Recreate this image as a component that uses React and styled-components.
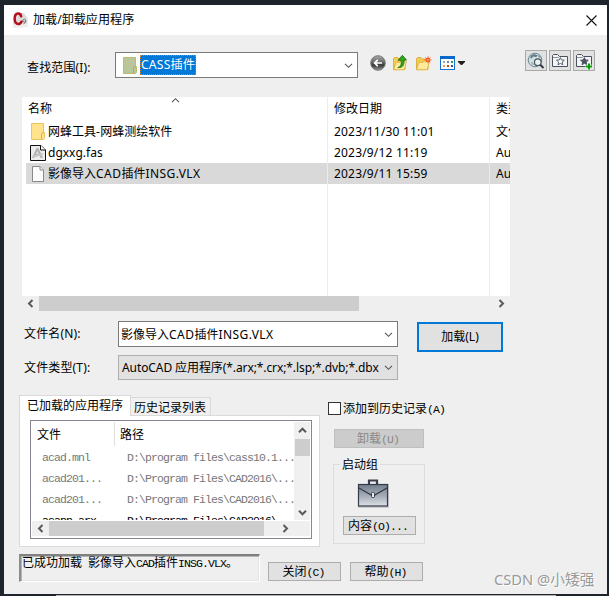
import React from "react";
import styled, { createGlobalStyle, css } from "styled-components";

const Global = createGlobalStyle`
  * { box-sizing: border-box; }
  body { margin: 0; background: #1d242c; overflow: hidden; }
`;

const Desktop = styled.div`
  width: 609px;
  height: 596px;
  padding: 5px 2px 0 4px;
  background: #1d242c;
  overflow: hidden;
  font-family: "Noto Sans", "Noto Sans CJK SC", sans-serif;
  font-size: 12px;
  line-height: 16px;
  color: #000;
`;

const DesktopEdge = styled.div`
  width: 500px;
  height: 1px;
  margin: 1px 0 0 52px;
  background: #b4b6b6;
`;

const Dialog = styled.div`
  position: relative;
  width: 603px;
  height: 589px;
  background: #efefef;
  display: flex;
  flex-direction: column;
`;

const TitleBar = styled.header`
  height: 30px;
  flex: none;
  background: #fff;
  display: flex;
  align-items: center;
  padding: 0 10px 0 8px;
`;

const Title = styled.div`
  flex: 1;
  margin-left: 4px;
  font-size: 12.1px;
`;

const Latin = styled.span`
  letter-spacing: ${(p) => p.$gap || 0}px;
`;

const MonoLatin = styled.span`
  font-family: "Liberation Mono", monospace;
  font-size: 11.5px;
  letter-spacing: -0.9px;
`;

const Song = styled.span`
  font-family: "Noto Sans CJK SC", sans-serif;
  font-size: 12px;
  line-height: 16px;
  white-space: pre;
`;

function SongText({ children }) {
  const parts = children.match(/[\x20-\x7e]+|[^\x20-\x7e]+/g);
  return (
    <Song>
      {parts.map((part, i) =>
        /[\x20-\x7e]/.test(part) ? <MonoLatin key={i}>{part}</MonoLatin> : part
      )}
    </Song>
  );
}

function FileName({ children }) {
  const parts = children.match(/[\x20-\x7e]+|[^\x20-\x7e]+/g);
  return (
    <span>
      {parts.map((part, i) =>
        /[A-Z-]/.test(part) ? <Latin key={i} $gap={0.45}>{part}</Latin> : part
      )}
    </span>
  );
}

const LookRow = styled.div`
  display: flex;
  align-items: flex-start;
  height: 28px;
  margin-top: 15px;
  padding-left: 23px;
`;

const FieldLabel = styled.label`
  width: ${(p) => p.$width}px;
  padding-top: ${(p) => p.$top || 0}px;
  letter-spacing: 0.15px;
  white-space: nowrap;
`;

const Combo = styled.div`
  width: ${(p) => p.$width}px;
  height: 26px;
  display: flex;
  align-items: center;
  flex: none;
  white-space: nowrap;
  padding: 0 4px 0 2px;
  border: 1px solid #7a7a7a;
  background: #fff;
  ${(p) =>
    p.$grey &&
    css`
      height: 25px;
      padding-left: 3px;
      border-color: #adadad;
      background: #e1e1e1;
    `}
`;

const LookCombo = styled(Combo)`
  margin-top: 2px;
  padding-left: 7px;
`;

const ComboText = styled.div`
  flex: 1;
  padding-top: 1px;
  letter-spacing: ${(p) => p.$gap || 0}px;
`;

const PickedFolder = styled.span`
  height: 20px;
  margin-left: 3px;
  line-height: 17px;
  color: #fff;
  background: #0078d7;
  border: 1px dotted #e07b1e;
  margin-right: auto;
  letter-spacing: 0.15px;
  font-size: 12.2px;
`;

const NavIcons = styled.div`
  display: flex;
  align-items: center;
  height: 20px;
  margin: 3px 0 0 12px;
  gap: 5px;
`;

const ViewSlot = styled.span`
  display: flex;
  margin-left: 3px;
`;

const Shortcuts = styled.div`
  display: flex;
  gap: 2px;
  margin: 0 12px 0 auto;
`;

const ShortcutButton = styled.button`
  width: 22px;
  height: 21px;
  padding: 0;
  display: flex;
  align-items: center;
  justify-content: center;
  border: 1px solid #a9a9a9;
  background: #e1e1e1;
`;

const FileList = styled.section`
  width: 488px;
  height: 199px;
  margin: 19px 0 0 18px;
  flex: none;
  background: #fff;
  display: grid;
  grid-template-columns: 306px 162px 1fr;
  overflow: hidden;
`;

const Column = styled.div`
  border-right: ${(p) => (p.$last ? 0 : 1)}px solid #e5eef8;
  padding-left: ${(p) => (p.$first ? 4 : 0)}px;
  min-width: 0;
  overflow: hidden;
`;

const ColumnHead = styled.div`
  height: 24px;
  padding: 4px 0 0 ${(p) => (p.$first ? 2 : 6)}px;
  display: flex;
  white-space: nowrap;
`;

const SortMark = styled.span`
  margin-left: 119px;
  margin-top: -8px;
`;

const Cell = styled.div`
  height: 21px;
  display: flex;
  align-items: center;
  padding-left: ${(p) => (p.$first ? 4 : 6)}px;
  white-space: nowrap;
  background: ${(p) => (p.$selected ? "#d9d9d9" : "transparent")};
  margin-right: -1px;
`;

const IconCell = styled.span`
  display: flex;
  justify-content: center;
  width: 16px;
  margin-right: 2px;
  flex: none;
`;

const HScroll = styled.div`
  display: flex;
  align-items: center;
  width: ${(p) => p.$width}px;
  height: 15px;
  flex: none;
  background: #efefef;
`;

const MainScroll = styled(HScroll)`
  margin-left: 18px;
`;

const InnerScroll = styled(HScroll)`
  margin-top: 1px;
`;

const ScrollThumb = styled.div`
  flex: none;
  width: ${(p) => p.$w}px;
  height: ${(p) => p.$h}px;
  background: #cdcdcd;
`;

const ArrowSlot = styled.div`
  display: flex;
  justify-content: center;
  align-items: center;
  width: 17px;
  height: ${(p) => p.$h || 15}px;
  margin-left: ${(p) => (p.$end ? "auto" : 0)};
`;

const BottomSlot = styled(ArrowSlot)`
  margin-top: auto;
`;

const InnerRight = styled(ArrowSlot)`
  margin-left: 13px;
`;

const FormArea = styled.div`
  display: flex;
  align-items: flex-start;
  height: 59px;
  margin: 10px 0 0 20px;
`;

const Fields = styled.div`
  display: flex;
  flex-direction: column;
  gap: 8px;
`;

const Field = styled.div`
  display: flex;
`;

const LoadButton = styled.button`
  width: 86px;
  height: 30px;
  margin: 1px 0 0 19px;
  padding: 0;
  border: 2px solid #0078d7;
  background: #e1e1e1;
  font: inherit;
  color: inherit;
`;

const Lower = styled.div`
  display: flex;
  align-items: flex-start;
  height: 152px;
  margin: 15px 0 0 15px;
`;

const TabBox = styled.div`
  width: 301px;
`;

const TabStrip = styled.div`
  height: 20px;
  display: flex;
  align-items: flex-end;
`;

const Tab = styled.div`
  width: ${(p) => (p.$active ? 112 : 80)}px;
  height: ${(p) => (p.$active ? 21 : 18)}px;
  padding: ${(p) => (p.$active ? "1px 0 0 7px" : "1px 0 0 3px")};
  border: 1px solid #d9d9d9;
  border-bottom: 0;
  border-left-width: ${(p) => (p.$active ? 1 : 0)}px;
  margin-bottom: ${(p) => (p.$active ? -1 : 0)}px;
  background: ${(p) => (p.$active ? "#fff" : "#f0f0f0")};
  z-index: ${(p) => (p.$active ? 1 : 0)};
  white-space: nowrap;
  line-height: 16px;
`;

const TabPage = styled.div`
  height: 132px;
  border: 1px solid #dadada;
  background: #fff;
  padding: 4px 7px 7px 10px;
`;

const AppList = styled.div`
  width: 282px;
  height: 119px;
  border: 1px solid #828790;
  padding: 1px;
  display: flex;
  flex-direction: column;
`;

const AppTop = styled.div`
  display: flex;
  height: 98px;
`;

const AppContent = styled.div`
  flex: 1;
  overflow: hidden;
`;

const AppRow = styled.div`
  display: grid;
  grid-template-columns: 85px 1fr;
  height: 21px;
  align-items: center;
  padding-left: 10px;
  white-space: nowrap;
  color: ${(p) => (p.$dark ? "#000" : "#777")};
`;

const AppHead = styled.div`
  display: flex;
  height: 24px;
`;

const AppHeadCell = styled.div`
  width: ${(p) => p.$width}px;
  padding: 4px 0 0 5px;
  border-right: ${(p) => (p.$rule ? 1 : 0)}px solid #dedede;
`;

const VScroll = styled.div`
  width: 16px;
  height: 98px;
  display: flex;
  flex-direction: column;
  align-items: center;
  background: #f0f0f0;
`;

const SideColumn = styled.div`
  margin-left: 8px;
  padding-top: 6px;
`;

const CheckLine = styled.label`
  display: flex;
  align-items: center;
  height: 15px;
`;

const CheckBox = styled.span`
  width: 13px;
  height: 13px;
  margin-right: 2px;
  border: 1px solid #333;
  background: #fff;
`;

const PlainButton = styled.button`
  display: flex;
  align-items: center;
  justify-content: center;
  width: ${(p) => p.$width}px;
  height: 19px;
  padding: 0 2px 0 0;
  border: 1px solid ${(p) => (p.disabled ? "#bfbfbf" : "#adadad")};
  background: ${(p) => (p.disabled ? "#cccccc" : "#e1e1e1")};
  color: ${(p) => (p.disabled ? "#888" : "#000")};
`;

const UnloadSlot = styled.div`
  margin: 13px 0 0 6px;
`;

const StartupGroup = styled.div`
  width: 92px;
  height: 80px;
  margin: 16px 0 0 5px;
  border: 1px solid #dcdcdc;
  display: flex;
  flex-direction: column;
  align-items: center;
`;

const GroupName = styled.div`
  align-self: flex-start;
  height: 16px;
  margin: -9px 0 0 6px;
  padding: 0 2px;
  background: #efefef;
`;

const CaseSlot = styled.div`
  width: 32px;
  height: 32px;
  margin: 6px 14px 6px 23px;
  align-self: flex-start;
`;

const Footer = styled.div`
  display: flex;
  align-items: flex-end;
  height: 28px;
  margin: 7px 0 0 15px;
`;

const StatusBox = styled.div`
  width: 241px;
  height: 28px;
  margin-right: 8px;
  padding-left: 1px;
  border-style: solid;
  border-width: 2px 1px 1px 2px;
  border-color: #808080 #fff #fff #8c8c8c;
  box-shadow: inset 1px 1px 0 #b5b5b5, inset -1px -1px 0 #e3e3e3;
  white-space: nowrap;
`;

const StatusText = styled.div`
  margin-top: -2px;
`;

const FooterButtons = styled.div`
  display: flex;
  gap: 9px;
  padding-bottom: 1px;
`;

const Watermark = styled.div`
  position: absolute;
  left: 490px;
  top: 564px;
  font-size: 14.7px;
  line-height: 20px;
  color: #999;
  text-shadow: 1px 1px 0 #fff;
  white-space: nowrap;
`;

const arrowPaths = {
  left: "M6.5 1L3 4.5L6.5 8",
  right: "M2.5 1L6 4.5L2.5 8",
  up: "M1 6.2L4.5 2.7L8 6.2",
  down: "M1 2.8L4.5 6.3L8 2.8",
};

function Arrow({ dir, thin }) {
  return (
    <svg width="9" height="9" viewBox="0 0 9 9">
      <path d={arrowPaths[dir]} fill="none" stroke={thin ? "#555" : "#5a5a5a"} strokeWidth={thin ? 1.1 : 2} />
    </svg>
  );
}

function AppLogo() {
  return (
    <svg width="17" height="17" viewBox="0 0 17 17">
      <path d="M1 5L4 1H12L15.5 6V15L1 15.5Z" fill="#dedede" />
      <path d="M1 12L8 10L15.5 12V15L1 15.5Z" fill="#ededed" />
      <path d="M9.3 5.2C9 2.3 7.7 1.4 6 1.5C3.5 1.7 2.6 4 2.7 7C2.8 10.4 4.2 12.2 6.5 12C8.4 11.8 9.4 10.6 9.9 8.6" fill="none" stroke="#b3101c" strokeWidth="2.4" />
      <path d="M9 1.4V5.7" stroke="#b3101c" />
      <circle cx="12.3" cy="8.6" r="1.4" fill="none" stroke="#777" />
      <path d="M13.7 8.6C13.8 10.5 13.2 11.5 11.4 11.8" fill="none" stroke="#777" />
    </svg>
  );
}

function Folder({ green }) {
  return (
    <svg width="14" height="17" viewBox="0 0 14 17">
      <path d="M.5.5H12.5V10H13.5V15.5L12.5 16.5H.5Z" fill={green ? "#bac69a" : "#ffe38d"} stroke={green ? "#b8bb73" : "#ecc35c"} />
      <path d="M10.5 16V11L11.5 9.5H13.5" fill="none" stroke={green ? "#a9ae5a" : "#e4ae38"} />
    </svg>
  );
}

function FasFile() {
  return (
    <svg width="16" height="16" viewBox="0 0 16 16">
      <path d="M.5.5H11L15.5 5V15.5H.5Z" fill="#ececec" stroke="#111" />
      <path d="M10.5.5V5H15.5" fill="#fff" stroke="#111" />
      <path d="M2 13L6.6 3H8.4L13 13H10.5L9.5 10.5H5L4 13Z" fill="#b2b2b2" />
      <path d="M6.3 9L7.3 6L8.5 9Z" fill="#eee" />
      <path d="M2 11L13 8V10L2 13Z" fill="#c7c7c7" />
    </svg>
  );
}

function BlankFile() {
  return (
    <svg width="12" height="16" viewBox="0 0 12 16">
      <path d="M.5.5H8L11.5 4V15.5H.5Z" fill="#fcfcfc" stroke="#8a8a8a" />
      <path d="M8 .5V4H11.5" fill="#eee" stroke="#8a8a8a" />
    </svg>
  );
}

function BackIcon() {
  return (
    <svg width="16" height="16" viewBox="0 0 16 16">
      <defs>
        <linearGradient id="back" x1="0" y1="0" x2="0" y2="1">
          <stop offset="0" stopColor="#aaa" />
          <stop offset=".45" stopColor="#666" />
          <stop offset=".65" stopColor="#393939" />
          <stop offset="1" stopColor="#9b9b9b" />
        </linearGradient>
      </defs>
      <circle cx="8" cy="8" r="7.3" fill="url(#back)" stroke="#777" strokeWidth="1" />
      <path d="M12 8H4.8M7.8 4.8L4.6 8L7.8 11.2" fill="none" stroke="#fff" strokeWidth="1.7" />
    </svg>
  );
}

function OpenFolder({ kind }) {
  return (
    <svg width="18" height="18" viewBox="0 0 18 18">
      <path d="M2.5 15.5V4.5L3.5 3.5H7L8 5H14V15.5Z" fill="#f4cb55" stroke="#d4a82e" strokeWidth=".8" />
      <path d="M2.5 15.8L5 8.3H9L10 7H15.5L13.3 15.8Z" fill="#ffe99a" stroke="#d9ac3a" strokeWidth=".8" />
      {kind === "up" ? (
        <path d="M6.8 13.5C10.3 12.7 10.5 10 10 6.3H7L11.4 1.3L15.5 6H13C13.3 11 11.8 14 6.8 13.5Z" fill="#32a51c" stroke="#107414" strokeWidth=".8" />
      ) : (
        <g stroke="#f05223" strokeWidth="1">
          <path d="M14 2.4V9.4M10.5 5.9H17.5M11.6 3.5L16.4 8.3M16.4 3.5L11.6 8.3" />
          <circle cx="14" cy="5.9" r="1.5" fill="#ffb33f" />
        </g>
      )}
    </svg>
  );
}

function ViewIcon() {
  return (
    <svg width="26" height="16" viewBox="0 0 26 16">
      <rect x=".5" y="1.5" width="14" height="13" fill="#fff" stroke="#1671d1" />
      <rect x="0" y="1" width="15" height="3" fill="#0868cc" />
      <path d="M3 6H5V8H3Z" fill="#9ba9ae" />
      <path d="M7 6H9V8H7Z" fill="#777fb9" />
      <path d="M11 6H13V8H11Z" fill="#30993e" />
      <path d="M3 10H5V12H3Z" fill="#e09b5f" />
      <path d="M7 10H9V12H7Z" fill="#bd4524" />
      <path d="M11 10H13V12H11Z" fill="#3d4e91" />
      <path d="M18 6H25V7L22 10H21L18 7Z" fill="#222" />
    </svg>
  );
}

function WebIcon() {
  return (
    <svg width="18" height="18" viewBox="0 0 18 18">
      <circle cx="8" cy="8" r="6.8" fill="#cfe0e3" stroke="#6d8790" />
      <path d="M4 3.5L7 2L11 3.5L9 5L6 4.5L4.5 6.5L3 6ZM11.5 3L14 6L11.5 5Z" fill="#5f7a82" />
      <path d="M4 10L6 10L7 13L5 13Z" fill="#9db5ba" />
      <circle cx="10.8" cy="10.2" r="3.3" fill="#e9f3f4" stroke="#4b555c" strokeWidth="1.2" />
      <path d="M13.3 12.8L16.5 16" stroke="#343b43" strokeWidth="2" />
    </svg>
  );
}

function StarFolder({ add }) {
  return (
    <svg width="18" height="18" viewBox="0 0 18 18">
      <path d="M1.5 14.5V3.5L2.5 2.5H6.5L8.5 4.5H16.5V14.5Z" fill="#f3f5f6" stroke="#48515c" />
      <path d="M2 5.5H7L8.5 4.5" fill="none" stroke="#8d949c" />
      <path d="M9.4 5.6L10.5 8L13.3 8.2L11.2 10L11.8 12.8L9.4 11.3L7 12.8L7.6 10L5.5 8.2L8.3 8Z" fill={add ? "#49505d" : "#fff"} stroke="#49505d" strokeWidth=".9" />
      {add && <path d="M14 11V18M10.5 14.5H17.5" stroke="#e9f3e9" strokeWidth="3.4" />}
      {add && <path d="M14 11.5V17.5M11 14.5H17" stroke="#079e08" strokeWidth="2" />}
    </svg>
  );
}

function Briefcase() {
  return (
    <svg width="32" height="32" viewBox="0 0 32 32">
      <defs>
        <linearGradient id="case" x1="0" y1="0" x2="0" y2="1">
          <stop offset="0" stopColor="#737e8d" />
          <stop offset=".55" stopColor="#a8afb9" />
          <stop offset="1" stopColor="#dde1e7" />
        </linearGradient>
      </defs>
      <path d="M12 6V2.5H20V6" fill="none" stroke="#383e4c" strokeWidth="2.2" />
      <rect x="1" y="6" width="31" height="24" fill="#c9cbce" />
      <rect x="1.5" y="6.5" width="29" height="21.5" fill="url(#case)" stroke="#343b49" strokeWidth="1.2" />
      <path d="M2 10L16 18L30 10" fill="none" stroke="#303746" strokeWidth="1.2" />
      <rect x="14.5" y="14.5" width="3" height="5" rx="1" fill="#eee" stroke="#303746" />
    </svg>
  );
}

const files = [
  { icon: <Folder />, name: "网蜂工具-网蜂测绘软件", date: "2023/11/30 11:01", type: "文件夹" },
  { icon: <FasFile />, name: "dgxxg.fas", date: "2023/9/12 11:19", type: "AutoCAD" },
  { icon: <BlankFile />, name: "影像导入CAD插件INSG.VLX", date: "2023/9/11 15:59", type: "AutoCAD", selected: true },
];

const loaded = [
  ["acad.mnl", "D:\\program files\\cass10.1..."],
  ["acad201...", "D:\\Program Files\\CAD2016\\..."],
  ["acad201...", "D:\\Program Files\\CAD2016\\..."],
  ["acapp.arx", "D:\\Program Files\\CAD2016\\", true],
];

export default function App() {
  return (
    <Desktop>
      <Global />
      <Dialog>
        <TitleBar>
          <AppLogo />
          <Title>加载/卸载应用程序</Title>
          <svg width="11" height="11" viewBox="0 0 11 11">
            <path d="M.5.5L10.5 10.5M10.5.5L.5 10.5" stroke="#111" strokeWidth="1.1" />
          </svg>
        </TitleBar>

        <LookRow>
          <FieldLabel $width={88} $top={10}>查找范围(I):</FieldLabel>
          <LookCombo $width={243}>
            <Folder green />
            <PickedFolder>CASS插件</PickedFolder>
            <Arrow dir="down" thin />
          </LookCombo>
          <NavIcons>
            <BackIcon />
            <OpenFolder kind="up" />
            <OpenFolder kind="new" />
            <ViewSlot><ViewIcon /></ViewSlot>
          </NavIcons>
          <Shortcuts>
            <ShortcutButton><WebIcon /></ShortcutButton>
            <ShortcutButton><StarFolder /></ShortcutButton>
            <ShortcutButton><StarFolder add /></ShortcutButton>
          </Shortcuts>
        </LookRow>

        <FileList>
          <Column $first>
            <ColumnHead $first>
              名称
              <SortMark><Arrow dir="up" thin /></SortMark>
            </ColumnHead>
            {files.map((f) => (
              <Cell key={f.name} $first $selected={f.selected}>
                <IconCell>{f.icon}</IconCell>
                <FileName>{f.name}</FileName>
              </Cell>
            ))}
          </Column>
          <Column>
            <ColumnHead>修改日期</ColumnHead>
            {files.map((f) => (
              <Cell key={f.name} $selected={f.selected}>
                <Latin $gap={0.18}>{f.date}</Latin>
              </Cell>
            ))}
          </Column>
          <Column $last>
            <ColumnHead>类型</ColumnHead>
            {files.map((f) => (
              <Cell key={f.name} $selected={f.selected}>{f.type}</Cell>
            ))}
          </Column>
        </FileList>
        <MainScroll $width={488}>
          <ArrowSlot><Arrow dir="left" /></ArrowSlot>
          <ScrollThumb $w={320} $h={15} />
          <ArrowSlot $end><Arrow dir="right" /></ArrowSlot>
        </MainScroll>

        <FormArea>
          <Fields>
            <Field>
              <FieldLabel $width={94} $top={5}>文件名(N):</FieldLabel>
              <Combo $width={280}>
                <ComboText><FileName>影像导入CAD插件INSG.VLX</FileName></ComboText>
                <Arrow dir="down" thin />
              </Combo>
            </Field>
            <Field>
              <FieldLabel $width={94} $top={5}>文件类型(T):</FieldLabel>
              <Combo $width={280} $grey>
                <ComboText $gap={-0.09}>AutoCAD 应用程序(*.arx;*.crx;*.lsp;*.dvb;*.dbx</ComboText>
                <Arrow dir="down" thin />
              </Combo>
            </Field>
          </Fields>
          <LoadButton>加载(L)</LoadButton>
        </FormArea>

        <Lower>
          <TabBox>
            <TabStrip>
              <Tab $active><SongText>已加载的应用程序</SongText></Tab>
              <Tab><SongText>历史记录列表</SongText></Tab>
            </TabStrip>
            <TabPage>
              <AppList>
                <AppTop>
                  <AppContent>
                    <AppHead>
                      <AppHeadCell $width={83} $rule><SongText>文件</SongText></AppHeadCell>
                      <AppHeadCell $width={150}><SongText>路径</SongText></AppHeadCell>
                    </AppHead>
                    {loaded.map(([file, path, dark], i) => (
                      <AppRow key={i} $dark={dark}>
                        <SongText>{file}</SongText>
                        <SongText>{path}</SongText>
                      </AppRow>
                    ))}
                  </AppContent>
                  <VScroll>
                    <ArrowSlot $h={17}><Arrow dir="up" /></ArrowSlot>
                    <ScrollThumb $w={15} $h={17} />
                    <BottomSlot><Arrow dir="down" /></BottomSlot>
                  </VScroll>
                </AppTop>
                <InnerScroll $width={278}>
                  <ArrowSlot><Arrow dir="left" /></ArrowSlot>
                  <ScrollThumb $w={215} $h={15} />
                  <InnerRight><Arrow dir="right" /></InnerRight>
                </InnerScroll>
              </AppList>
            </TabPage>
          </TabBox>

          <SideColumn>
            <CheckLine>
              <CheckBox />
              <SongText>添加到历史记录(A)</SongText>
            </CheckLine>
            <UnloadSlot>
              <PlainButton $width={90} disabled><SongText>卸载(U)</SongText></PlainButton>
            </UnloadSlot>
            <StartupGroup>
              <GroupName><SongText>启动组</SongText></GroupName>
              <CaseSlot><Briefcase /></CaseSlot>
              <PlainButton $width={73}><SongText>内容(O)...</SongText></PlainButton>
            </StartupGroup>
          </SideColumn>
        </Lower>

        <Footer>
          <StatusBox>
            <StatusText><SongText>已成功加载 影像导入CAD插件INSG.VLX。</SongText></StatusText>
          </StatusBox>
          <FooterButtons>
            <PlainButton $width={73}><SongText>关闭(C)</SongText></PlainButton>
            <PlainButton $width={73}><SongText>帮助(H)</SongText></PlainButton>
          </FooterButtons>
        </Footer>
        <Watermark>CSDN @小矮强</Watermark>
      </Dialog>
      <DesktopEdge />
    </Desktop>
  );
}
